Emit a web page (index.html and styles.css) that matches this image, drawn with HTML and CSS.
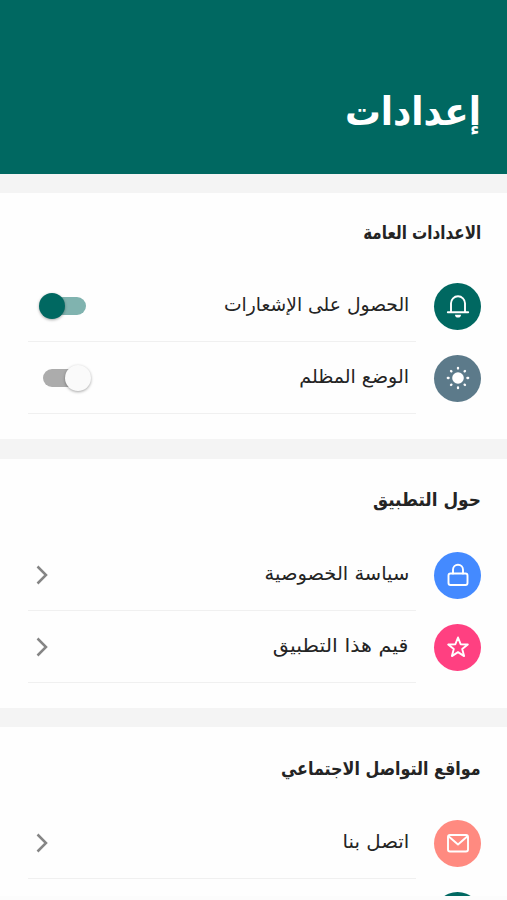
FILE: index.html
```html
<!DOCTYPE html>
<html lang="ar" dir="rtl">
<head>
<meta charset="utf-8">
<title>إعدادات</title>
<link rel="stylesheet" href="styles.css">
</head>
<body>
<div class="app">
  <header class="header"><h1 class="fit fit-title">إعدادات</h1></header>
  <main class="content">
    <section class="card general">
      <h2><span class="fit fit-general">الاعدادات العامة</span></h2>
      <div class="row">
        <span class="icon teal"><svg viewBox="0 0 24 24"><path d="M1.800 18.300h20.400M5 18V9.300a7 7 0 0 1 14 0V18"/><path class="solid" d="M9 20.700h6a3 2.800 0 0 1-6 0z"/></svg></span>
        <div class="body"><span class="fit fit-notify">الحصول على الإشعارات</span><span class="switch on"></span></div>
      </div>
      <div class="row">
        <span class="icon slate"><svg viewBox="0 0 24 24"><circle class="solid" cx="12" cy="12" r="5.800"/><path class="rays" d="M12 1.800v.8M12 21.400v.8M1.800 12h.8M21.400 12h.8M5 5l.4.4M18.600 18.600l.4.4M5 19l.4-.4M18.600 5.400l.4-.4"/></svg></span>
        <div class="body"><span class="fit fit-dark">الوضع المظلم</span><span class="switch off"></span></div>
      </div>
    </section>
    <section class="card about">
      <h2><span class="fit fit-about">حول التطبيق</span></h2>
      <div class="row">
        <span class="icon blue"><svg viewBox="0 0 24 24"><rect x="2.500" y="10.500" width="19" height="11.500" rx="2"/><path d="M7 10.500V6.700a5 5 0 0 1 10 0v3.800"/></svg></span>
        <div class="body"><span class="fit fit-privacy">سياسة الخصوصية</span><svg class="chevron" viewBox="0 0 12 20"><path d="M1.500 1.500 10 10l-8.500 8.500"/></svg></div>
      </div>
      <div class="row">
        <span class="icon pink"><svg viewBox="0 0 24 24"><path d="M12 2.500l2.600 6.700 7.200.3-5.600 4.600 1.900 7-6.100-4-6.100 4 1.900-7-5.600-4.600 7.200-.3z"/></svg></span>
        <div class="body"><span class="fit fit-rate">قيم هذا التطبيق</span><svg class="chevron" viewBox="0 0 12 20"><path d="M1.500 1.500 10 10l-8.500 8.500"/></svg></div>
      </div>
    </section>
    <section class="card social">
      <h2><span class="fit fit-social">مواقع التواصل الاجتماعي</span></h2>
      <div class="row">
        <span class="icon coral"><svg viewBox="0 0 24 24"><rect x="2" y="4" width="20" height="16.500" rx="2"/><path d="M2.800 5.500l9.200 8 9.200-8"/></svg></span>
        <div class="body"><span class="fit fit-contact">اتصل بنا</span><svg class="chevron" viewBox="0 0 12 20"><path d="M1.500 1.500 10 10l-8.500 8.500"/></svg></div>
      </div>
      <div class="row"><span class="icon teal"></span></div>
    </section>
  </main>
  <footer class="bottom"></footer>
</div>
</body>
</html>
```
FILE: styles.css
```css
* { box-sizing: border-box; }
body { margin: 0; background: #fefefe; color: #242424; font-family: "DejaVu Sans", sans-serif; }
.app { height: 900px; display: flex; flex-direction: column; overflow: hidden; }
.header { flex: none; height: 174px; padding: 87px 26px 0; background: #006861; color: #fff; }
h1 { margin: 0; width: max-content; font-size: 37px; line-height: 50px; font-weight: 700; }
.content { flex: 1; min-height: 0; overflow: hidden; padding-top: 19px; background: #f4f4f4; display: flex; flex-direction: column; }
.card { flex: none; background: #fefefe; padding: 0 26px; }
.general { height: 246px; margin-bottom: 20px; }
.about { height: 249px; margin-bottom: 19px; }
.social { height: 240px; }
h2 { margin: 0; padding-top: 25px; height: 77px; font-size: 18px; line-height: 30px; font-weight: 700; }
.about h2 { height: 80px; padding-top: 26px; }
.social h2 { height: 80px; padding-top: 27px; }
.fit { display: inline-block; white-space: nowrap; transform-origin: right center; }
.fit-title { transform: scale(.965, 1.05); }
.fit-general { transform: scale(.842, 1.04); }
.fit-notify { transform: scaleX(.984); }
.fit-about { transform: scale(.94, 1.04); }
.fit-privacy { transform: scaleX(1.024); }
.fit-rate { transform: scaleX(1.09); }
.fit-social { transform: scale(.885, 1.04); }
.fit-contact { transform: scaleX(1.04); }
.row { height: 72px; display: flex; align-items: center; gap: 18px; }
.icon { flex: none; width: 47px; height: 47px; border-radius: 50%; display: grid; place-items: center; }
.icon svg { width: 24px; height: 24px; fill: none; stroke: #fff; stroke-width: 1.9; stroke-linejoin: round; stroke-linecap: round; }
.icon .solid { fill: #fff; stroke: none; }
.icon .rays { stroke-width: 2.3; }
.teal { background: #006861; }
.slate { background: #5c7a8a; }
.blue { background: #448aff; }
.pink { background: #ff4081; }
.coral { background: #ff8a80; }
.body { flex: 1; height: 72px; margin-left: 2px; padding: 0 7px 3px 8px; display: flex; align-items: center; justify-content: space-between; border-bottom: 1px solid #f0f0f0; font-size: 19px; }
.chevron { width: 12px; height: 20px; margin-top: 4px; fill: none; stroke: #858585; stroke-width: 2.5; }
.switch { position: relative; width: 43px; height: 18px; margin: 3px 0 0 7px; border-radius: 9px; }
.switch::after { content: ""; position: absolute; top: -4px; width: 26px; height: 26px; border-radius: 50%; box-shadow: 0 1px 3px rgba(0,0,0,.35); }
.on { background: #80b3af; }
.on::after { left: -4px; background: #006861; }
.off { background: #acacac; }
.off::after { right: -5px; background: #fafafa; }
.bottom { flex: none; height: 4px; background: #fcfcfc; }
```
